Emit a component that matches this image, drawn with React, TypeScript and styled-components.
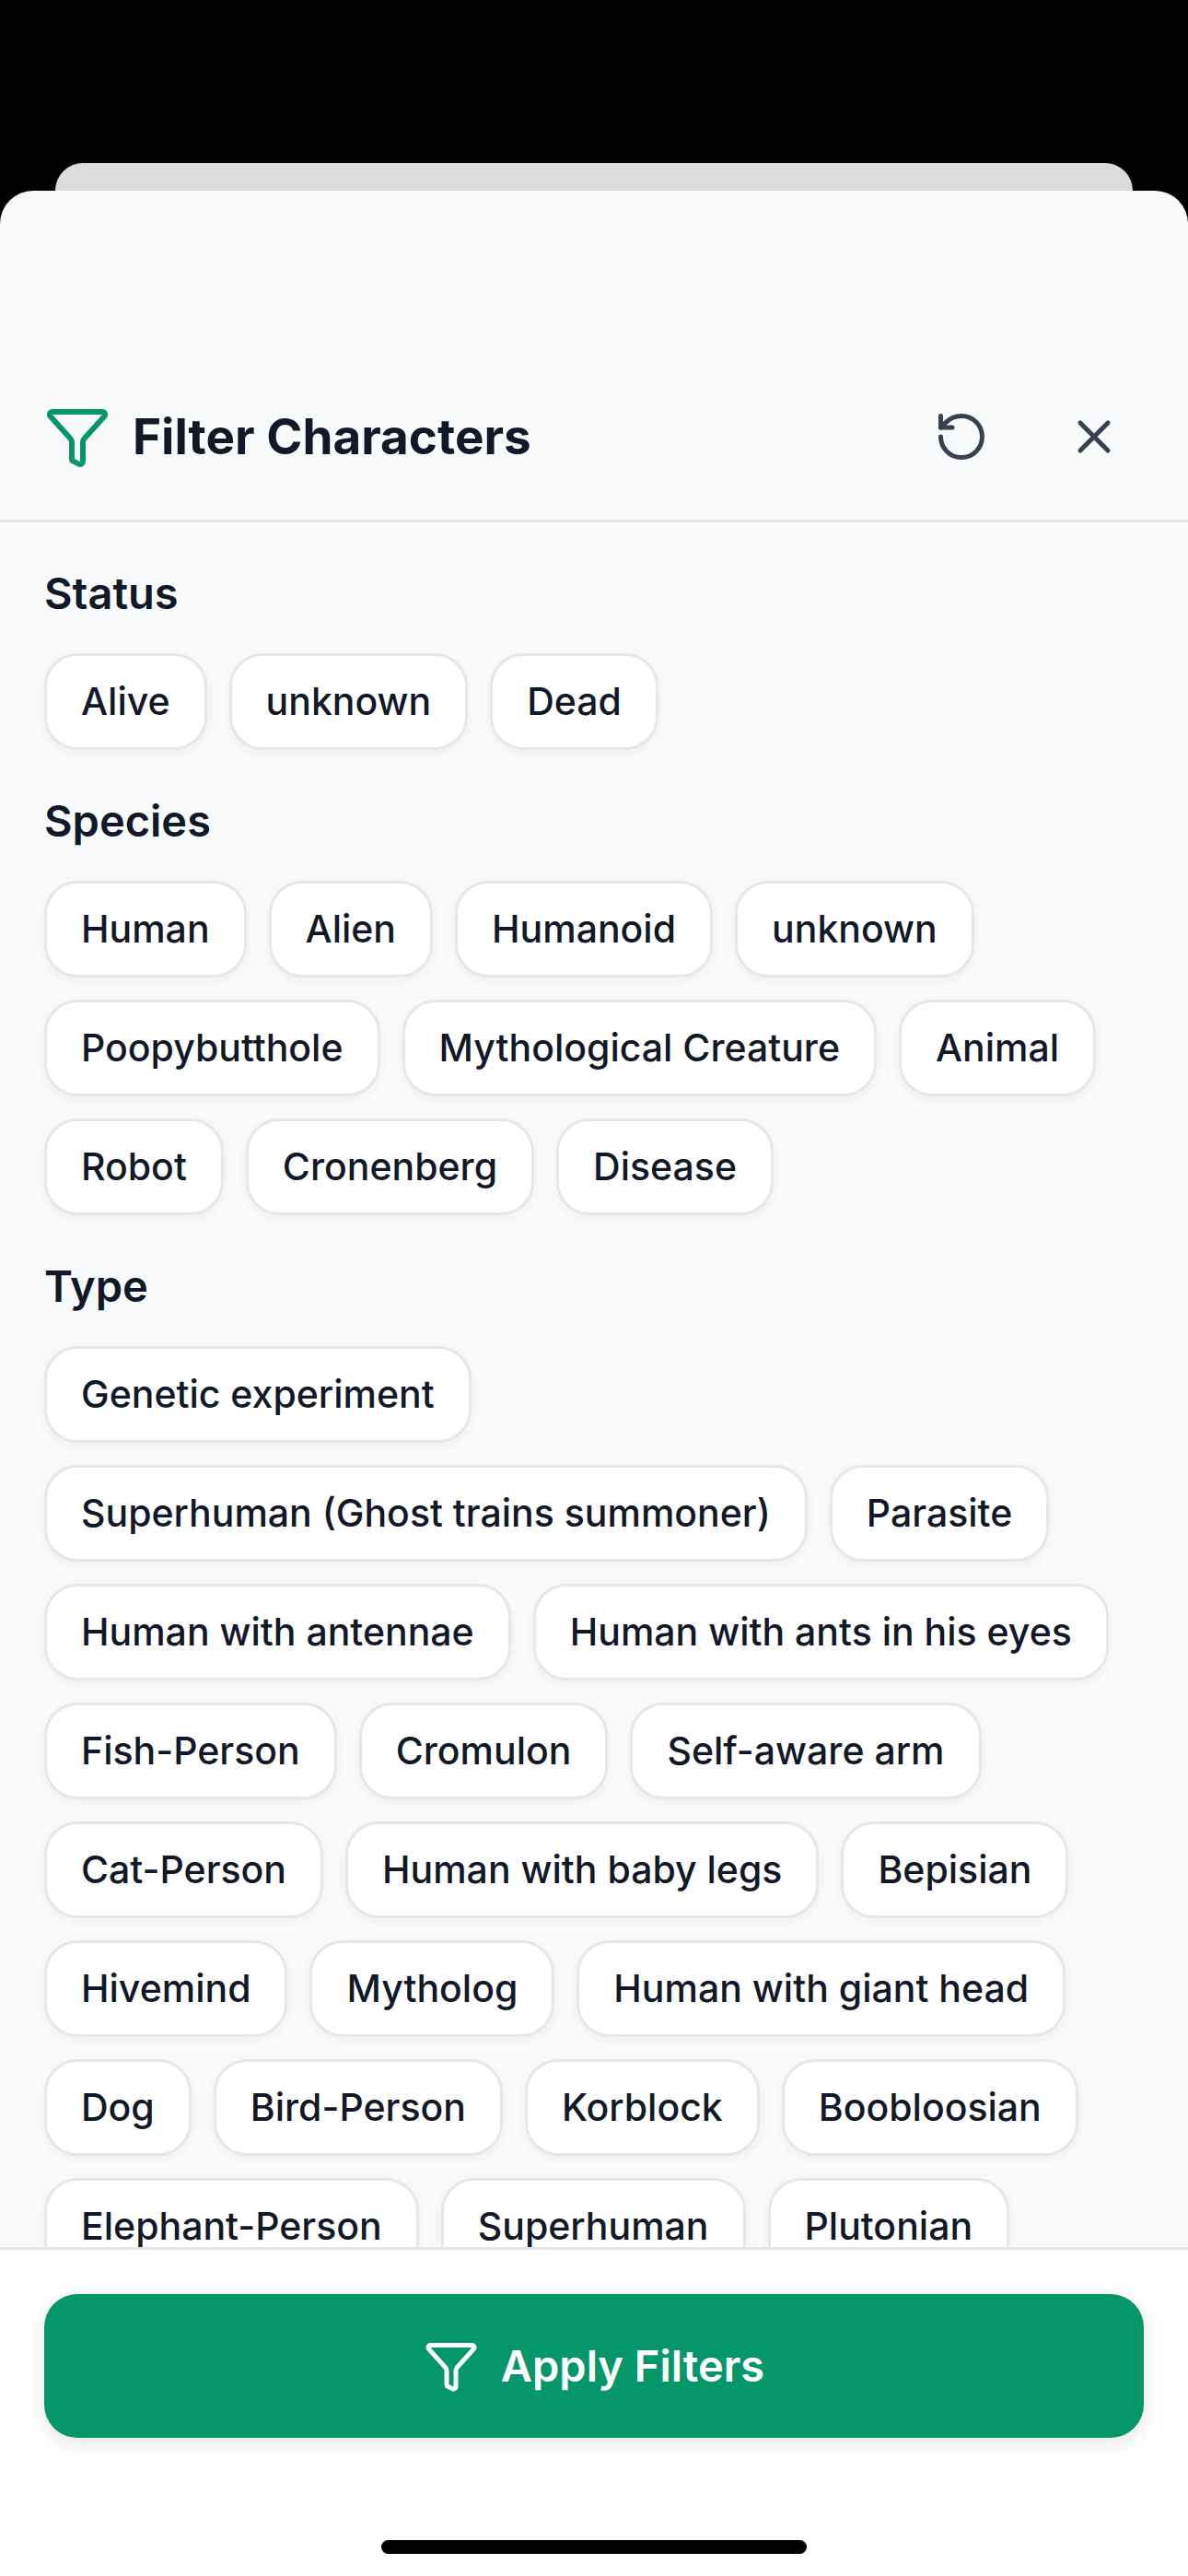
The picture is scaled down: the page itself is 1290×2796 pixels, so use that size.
import { useState } from "react";
import styled, { createGlobalStyle } from "styled-components";
import { Funnel, RotateCcw, X } from "lucide-react";

const GlobalStyle = createGlobalStyle`
  *, *::before, *::after { box-sizing: border-box; }
  html, body, #root { height: 100%; }
  body {
    margin: 0;
    background: #000;
    color: #111827;
    font-family: Inter, "Liberation Sans", sans-serif;
  }
  button { font: inherit; color: inherit; border: 0; cursor: pointer; }
`;

const Screen = styled.div`
  display: flex;
  flex-direction: column;
  height: 100%;
  padding-top: 177px;
`;

const BackCard = styled.div`
  flex: none;
  height: 30px;
  margin: 0 60px;
  border-radius: 30px 30px 0 0;
  background: #dbdcde;
`;

const Sheet = styled.main`
  flex: 1;
  min-height: 0;
  display: flex;
  flex-direction: column;
  overflow: hidden;
  border-radius: 36px 36px 0 0;
  background: #f9fafb;
`;

const Header = styled.header`
  flex: none;
  display: flex;
  align-items: center;
  justify-content: space-between;
  padding: 213px 48px 36px;
  border-bottom: 3px solid #e5e7eb;
`;

const TitleGroup = styled.div`
  display: flex;
  align-items: center;
  gap: 24px;
  color: #059669;
`;

const Title = styled.h1`
  margin: 0;
  color: #111827;
  font-size: 53px;
  line-height: 66px;
  font-weight: 700;
`;

const Actions = styled.div`
  display: flex;
  gap: 36px;
`;

const IconButton = styled.button`
  display: flex;
  padding: 24px;
  border-radius: 36px;
  background: transparent;
  color: #374151;
`;

const Filters = styled.div`
  flex: 1;
  min-height: 0;
  display: flex;
  flex-direction: column;
  gap: 48px;
  padding: 48px 48px 0;
  overflow-y: auto;
  scrollbar-width: none;
`;

const Group = styled.section`
  display: flex;
  flex-direction: column;
  gap: 36px;
`;

const GroupTitle = styled.h2`
  margin: 0;
  font-size: 47px;
  line-height: 58px;
  font-weight: 600;
`;

const Chips = styled.div`
  display: flex;
  flex-wrap: wrap;
  gap: 24px;
`;

const Chip = styled.button<{ $selected: boolean }>`
  padding: 24px 37px;
  border: 3px solid ${(p) => (p.$selected ? "#059669" : "#e5e7eb")};
  border-radius: 36px;
  background: ${(p) => (p.$selected ? "#059669" : "#fff")};
  color: ${(p) => (p.$selected ? "#fff" : "#111827")};
  box-shadow: 0 3px 12px rgba(0, 0, 0, 0.05);
  font-size: 41px;
  line-height: 51px;
  font-weight: 500;
  white-space: nowrap;
`;

const Footer = styled.footer`
  flex: none;
  display: flex;
  flex-direction: column;
  align-items: center;
  gap: 111px;
  padding: 48px 48px 24px;
  border-top: 3px solid #e5e7eb;
  background: #fff;
`;

const ApplyButton = styled.button`
  display: flex;
  align-items: center;
  justify-content: center;
  gap: 24px;
  width: 100%;
  padding: 48px;
  border-radius: 36px;
  background: #059669;
  color: #fff;
  box-shadow: 0 6px 24px rgba(0, 0, 0, 0.1);
  font-size: 47px;
  line-height: 60px;
  font-weight: 600;
`;

const HomeIndicator = styled.div`
  width: 462px;
  height: 15px;
  border-radius: 8px;
  background: #000;
`;

const groups = [
  { title: "Status", options: ["Alive", "unknown", "Dead"] },
  {
    title: "Species",
    options: [
      "Human", "Alien", "Humanoid", "unknown", "Poopybutthole",
      "Mythological Creature", "Animal", "Robot", "Cronenberg", "Disease",
    ],
  },
  {
    title: "Type",
    options: [
      "Genetic experiment", "Superhuman (Ghost trains summoner)", "Parasite",
      "Human with antennae", "Human with ants in his eyes", "Fish-Person",
      "Cromulon", "Self-aware arm", "Cat-Person", "Human with baby legs",
      "Bepisian", "Hivemind", "Mytholog", "Human with giant head", "Dog",
      "Bird-Person", "Korblock", "Boobloosian", "Elephant-Person",
      "Superhuman", "Plutonian",
    ],
  },
];

export default function App() {
  const [selected, setSelected] = useState<Record<string, string>>({});

  const toggle = (group: string, option: string) =>
    setSelected((s) => ({ ...s, [group]: s[group] === option ? "" : option }));

  return (
    <>
      <GlobalStyle />
      <Screen>
        <BackCard />
        <Sheet>
          <Header>
            <TitleGroup>
              <Funnel size={72} />
              <Title>Filter Characters</Title>
            </TitleGroup>
            <Actions>
              <IconButton type="button" aria-label="Reset filters" onClick={() => setSelected({})}>
                <RotateCcw size={60} />
              </IconButton>
              <IconButton type="button" aria-label="Close">
                <X size={60} />
              </IconButton>
            </Actions>
          </Header>
          <Filters>
            {groups.map((group) => (
              <Group key={group.title} aria-label={group.title}>
                <GroupTitle>{group.title}</GroupTitle>
                <Chips>
                  {group.options.map((option) => (
                    <Chip
                      key={option}
                      type="button"
                      $selected={selected[group.title] === option}
                      aria-pressed={selected[group.title] === option}
                      onClick={() => toggle(group.title, option)}
                    >
                      {option}
                    </Chip>
                  ))}
                </Chips>
              </Group>
            ))}
          </Filters>
          <Footer>
            <ApplyButton type="button">
              <Funnel size={60} />
              Apply Filters
            </ApplyButton>
            <HomeIndicator />
          </Footer>
        </Sheet>
      </Screen>
    </>
  );
}
